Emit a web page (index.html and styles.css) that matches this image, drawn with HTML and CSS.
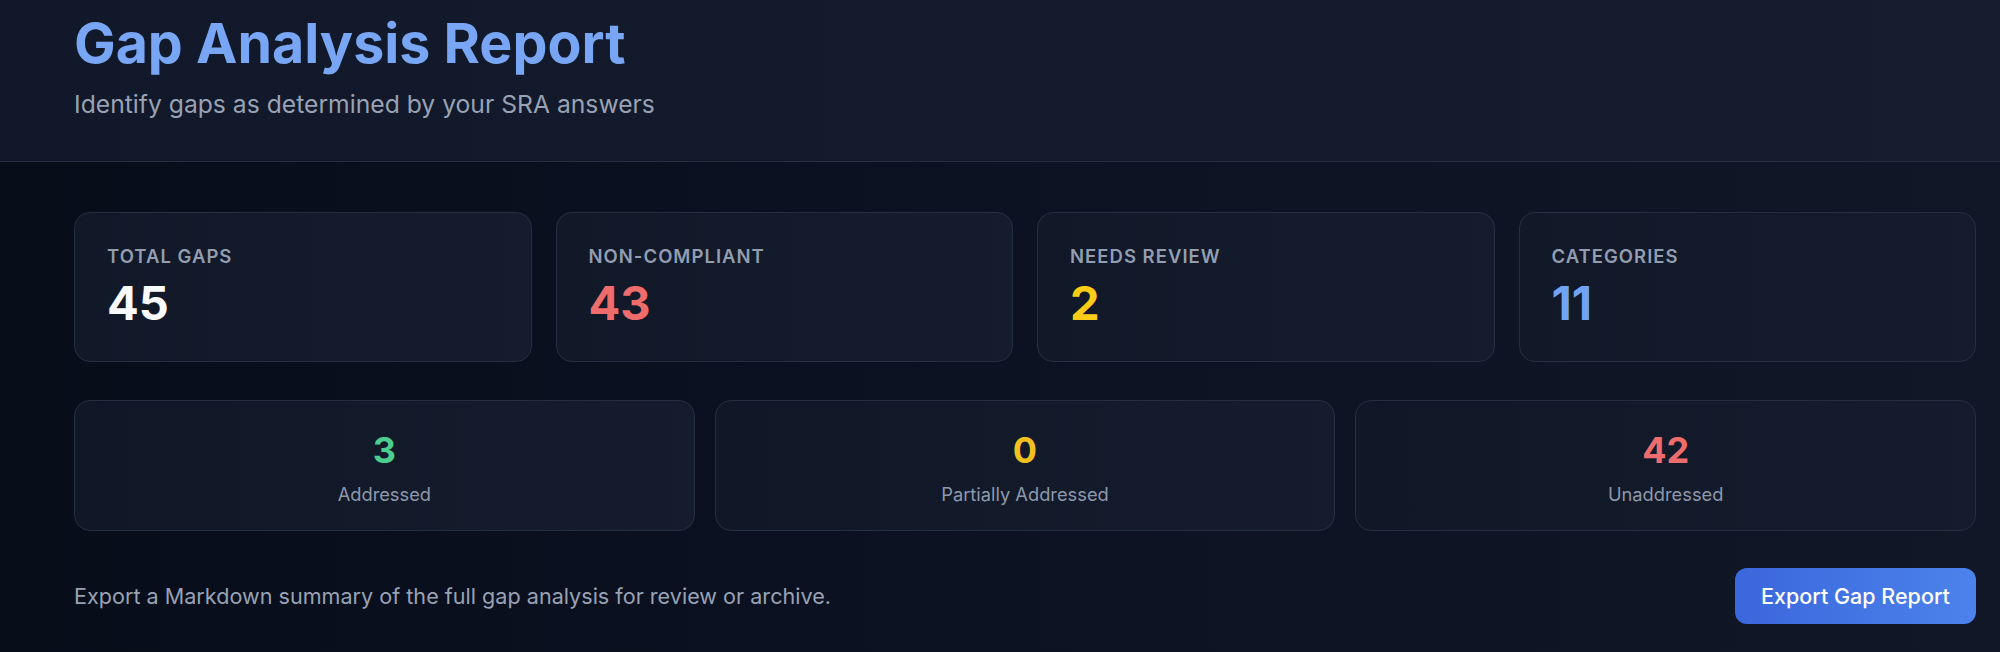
FILE: index.html
```html
<!DOCTYPE html>
<html lang="en">
<head>
<meta charset="utf-8">
<title>Gap Analysis Report</title>
<link rel="stylesheet" href="styles.css">
</head>
<body>
<div class="page">
  <header class="header">
    <h1 class="title">Gap Analysis Report</h1>
    <p class="subtitle">Identify gaps as determined by your SRA answers</p>
  </header>
  <main class="content">
    <section class="stats">
      <div class="card">
        <div class="card-label">Total Gaps</div>
        <div class="card-value white">45</div>
      </div>
      <div class="card">
        <div class="card-label">Non-Compliant</div>
        <div class="card-value red">43</div>
      </div>
      <div class="card">
        <div class="card-label">Needs Review</div>
        <div class="card-value yellow">2</div>
      </div>
      <div class="card">
        <div class="card-label">Categories</div>
        <div class="card-value blue">11</div>
      </div>
    </section>
    <section class="status">
      <div class="status-card">
        <div class="status-value green">3</div>
        <div class="status-label">Addressed</div>
      </div>
      <div class="status-card">
        <div class="status-value amber">0</div>
        <div class="status-label">Partially Addressed</div>
      </div>
      <div class="status-card">
        <div class="status-value red">42</div>
        <div class="status-label">Unaddressed</div>
      </div>
    </section>
    <section class="export">
      <p class="export-text">Export a Markdown summary of the full gap analysis for review or archive.</p>
      <button class="export-btn" type="button">Export Gap Report</button>
    </section>
  </main>
</div>
</body>
</html>
```

FILE: styles.css
```css
* { box-sizing: border-box; }
html, body {
  margin: 0;
  padding: 0;
}
body {
  font-family: "Inter", "Noto Sans", "Liberation Sans", sans-serif;
  background: linear-gradient(90deg, #080d1a 0%, #0c1222 50%, #101727 100%);
  color: #e5e7eb;
  min-height: 652px;
  overflow: hidden;
}
.page {
  width: 2000px;
}
.header {
  background: linear-gradient(90deg, #111829 0%, #141b2c 60%, #161d2e 100%);
  border-bottom: 1px solid #262e3f;
  padding: 12px 24px 41px 74px;
}
.title {
  margin: 0;
  font-size: 55.5px;
  line-height: 62px;
  font-weight: 700;
  color: #78a6f4;
  letter-spacing: 0;
}
.subtitle {
  margin: 14px 0 0;
  font-size: 24.7px;
  line-height: 32px;
  font-weight: 400;
  color: #98a2b4;
}
.content {
  padding: 50px 24px 0 74px;
}
.stats {
  display: grid;
  grid-template-columns: repeat(4, 1fr);
  gap: 24px;
}
.card {
  background: linear-gradient(90deg, #111828 0%, #151c2d 100%);
  border: 1px solid #262f41;
  border-radius: 16px;
  padding: 30px 32px 34px;
}
.card-label {
  font-size: 18.5px;
  line-height: 26px;
  font-weight: 600;
  letter-spacing: 0.055em;
  text-transform: uppercase;
  color: #929db0;
}
.card-value {
  margin-top: 10px;
  font-size: 47px;
  line-height: 48px;
  font-weight: 700;
}
.white { color: #f8fafc; }
.red { color: #ef6c6c; }
.yellow { color: #facc15; }
.blue { color: #72a4f6; }
.green { color: #4ccf8e; }
.amber { color: #f3c11f; }
.status {
  margin-top: 38px;
  display: grid;
  grid-template-columns: repeat(3, 1fr);
  gap: 20px;
}
.status-card {
  background: linear-gradient(90deg, #101726 0%, #151c2d 100%);
  border: 1px solid #262f41;
  border-radius: 16px;
  padding: 29px 24px 22px;
  text-align: center;
}
.status-value {
  font-size: 36px;
  line-height: 40px;
  font-weight: 700;
}
.status-label {
  margin-top: 10px;
  font-size: 18.3px;
  line-height: 28px;
  color: #8e98ab;
}
.export {
  margin-top: 37px;
  display: flex;
  align-items: center;
  justify-content: space-between;
}
.export-text {
  margin: 0;
  font-size: 21.6px;
  line-height: 28px;
  color: #98a2b4;
}
.export-btn {
  height: 56px;
  width: 241px;
  border: none;
  border-radius: 12px;
  background: linear-gradient(90deg, #3a67dc 0%, #4c82eb 100%);
  color: #ffffff;
  font-family: "Inter", "Noto Sans", "Liberation Sans", sans-serif;
  font-size: 21.5px;
  font-weight: 500;
  padding: 0;
}
```
